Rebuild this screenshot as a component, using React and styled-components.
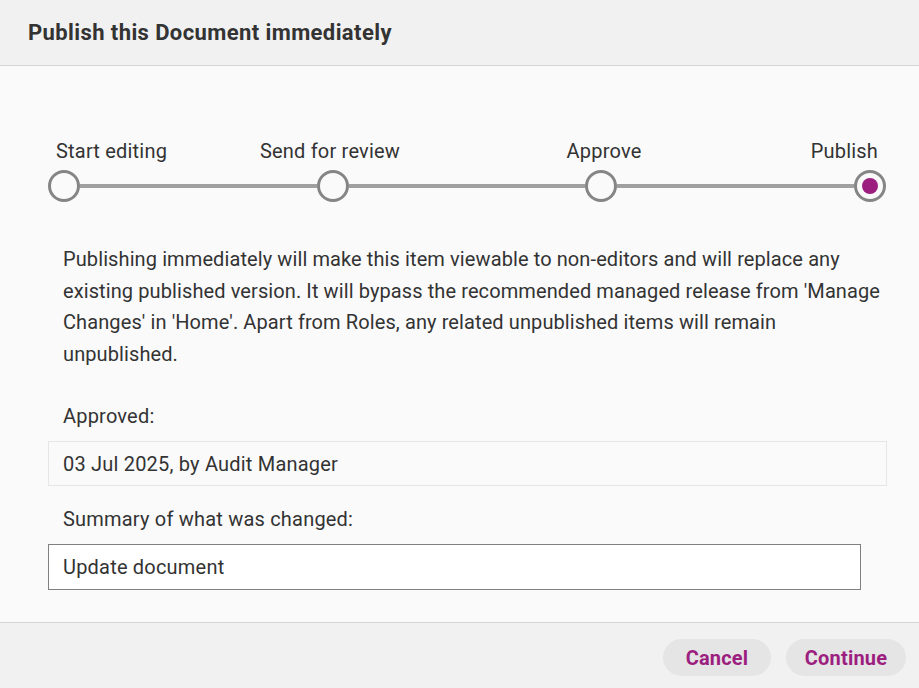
import React from "react";
import styled, { createGlobalStyle } from "styled-components";

const Global = createGlobalStyle`
  html, body, #root { height: 100%; margin: 0; padding: 0; }
  body { font-family: Roboto, "Noto Sans", Arial, sans-serif; color: #333; background: #fafafa; }
  * { box-sizing: border-box; }
`;

const Dialog = styled.div`
  display: flex;
  flex-direction: column;
  height: 100vh;
  background: #fafafa;
`;

const Header = styled.div`
  height: 66px;
  flex: 0 0 auto;
  display: flex;
  align-items: center;
  padding: 0 28px 0;
  background: #f1f1f1;
  border-bottom: 1px solid #d6d6d6;
`;

const Title = styled.h1`
  margin: 0;
  font-size: 22px;
  letter-spacing: 0.4px;
  font-weight: 700;
  color: #333;
`;

const Body = styled.div`
  flex: 1;
  padding: 74px 32px 0 48px;
  display: flex;
  flex-direction: column;
`;

const Stepper = styled.div`
  display: flex;
  flex-direction: column;
  gap: 7px;
  padding-right: 1px;
`;

const LabelRow = styled.div`
  display: flex;
  justify-content: space-between;
  padding: 0 16px;
`;

const LabelCell = styled.div`
  width: 0;
  display: flex;
  justify-content: ${(p) => (p.$align === "start" ? "flex-start" : p.$align === "end" ? "flex-end" : "center")};
  margin-left: ${(p) => (p.$align === "start" ? "-8px" : "0")};
  margin-right: ${(p) => (p.$align === "end" ? "-8px" : "0")};
`;

const StepLabel = styled.span`
  white-space: nowrap;
  font-size: 20px;
  letter-spacing: 0.2px;
  line-height: 23px;
  color: #333;
`;

const Track = styled.div`
  display: flex;
  align-items: center;
`;

const Circle = styled.div`
  width: 32px;
  height: 32px;
  flex: 0 0 32px;
  border-radius: 50%;
  border: 3px solid #858585;
  background: #fafafa;
  display: flex;
  align-items: center;
  justify-content: center;
`;

const Dot = styled.div`
  width: 16px;
  height: 16px;
  border-radius: 50%;
  background: #9c1f80;
`;

const Line = styled.div`
  flex: 1;
  height: 4px;
  background: #a0a0a0;
`;

const Paragraph = styled.p`
  margin: 42px 0 0;
  padding: 0 0 0 15px;
  font-size: 20px;
  letter-spacing: 0.1px;
  line-height: 31.5px;
  color: #333;
`;

const FieldLabel = styled.div`
  margin-top: ${(p) => p.$top}px;
  padding-left: 15px;
  font-size: 20px;
  letter-spacing: 0.2px;
  line-height: 23px;
  color: #333;
`;

const ReadOnly = styled.div`
  margin-top: 13px;
  height: 45px;
  display: flex;
  align-items: center;
  padding: 0 14px;
  background: #fafafa;
  border: 1px solid #e6e6e6;
  font-size: 20px;
  letter-spacing: 0.2px;
  color: #333;
`;

const Input = styled.input`
  margin-top: 13px;
  width: 813px;
  height: 46px;
  padding: 0 14px;
  background: #fff;
  border: 1px solid #808080;
  border-radius: 0;
  font-family: Roboto, "Noto Sans", Arial, sans-serif;
  font-size: 20px;
  letter-spacing: 0.2px;
  color: #333;
  outline: none;
`;

const Footer = styled.div`
  height: 66px;
  flex: 0 0 auto;
  display: flex;
  align-items: center;
  justify-content: flex-end;
  gap: 15px;
  padding: 4px 13px 0 0;
  background: #f1f1f1;
  border-top: 1px solid #d6d6d6;
`;

const Button = styled.button`
  height: 37px;
  width: ${(p) => p.$w}px;
  padding: 0;
  border: none;
  border-radius: 19px;
  background: #e5e5e5;
  color: #9c1f80;
  font-family: Roboto, "Noto Sans", Arial, sans-serif;
  font-weight: 700;
  font-size: 20px;
  letter-spacing: 0.2px;
  cursor: pointer;
`;

const steps = [
  { label: "Start editing", align: "start" },
  { label: "Send for review", align: "center" },
  { label: "Approve", align: "center" },
  { label: "Publish", align: "end", active: true },
];

export default function App() {
  return (
    <>
      <Global />
      <Dialog>
        <Header>
          <Title>Publish this Document immediately</Title>
        </Header>
        <Body>
          <Stepper>
            <LabelRow>
              {steps.map((s) => (
                <LabelCell key={s.label} $align={s.align}>
                  <StepLabel>{s.label}</StepLabel>
                </LabelCell>
              ))}
            </LabelRow>
            <Track>
              {steps.map((s, i) => (
                <React.Fragment key={s.label}>
                  {i > 0 && <Line />}
                  <Circle>{s.active && <Dot />}</Circle>
                </React.Fragment>
              ))}
            </Track>
          </Stepper>
          <Paragraph>
            Publishing immediately will make this item viewable to non-editors and will replace any
            existing published version. It will bypass the recommended managed release from 'Manage
            Changes' in 'Home'. Apart from Roles, any related unpublished items will remain
            unpublished.
          </Paragraph>
          <FieldLabel $top={35}>Approved:</FieldLabel>
          <ReadOnly>03 Jul 2025, by Audit Manager</ReadOnly>
          <FieldLabel $top={22}>Summary of what was changed:</FieldLabel>
          <Input defaultValue="Update document" />
        </Body>
        <Footer>
          <Button $w={108}>Cancel</Button>
          <Button $w={120}>Continue</Button>
        </Footer>
      </Dialog>
    </>
  );
}
